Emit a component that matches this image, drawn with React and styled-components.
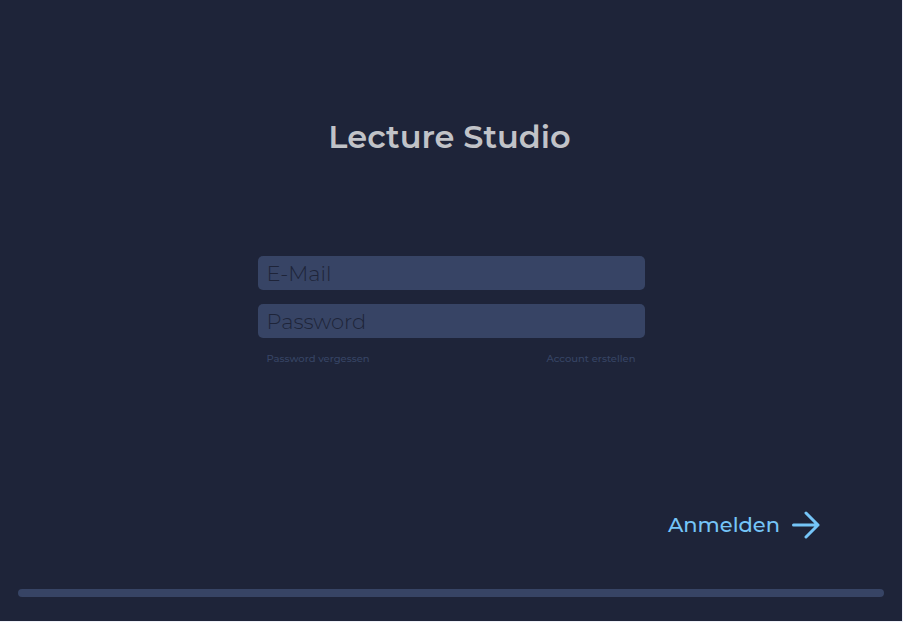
import React from "react";
import styled, { createGlobalStyle } from "styled-components";

const GlobalStyle = createGlobalStyle`
  * { box-sizing: border-box; }
  html { background: #f0f2fa; }
  body { margin: 0; padding: 0 1px 1px 0; }
`;

const Page = styled.div`
  display: flex;
  flex-direction: column;
  align-items: center;
  min-height: calc(100vh - 1px);
  padding: 117px 18px 24px;
  background: #1e2439;
  font-family: Montserrat, Inter, sans-serif;
`;

const Title = styled.h1`
  margin: 0;
  padding-right: 3px;
  color: #c1c3c8;
  font-size: 32px;
  font-weight: 600;
  line-height: 40px;
`;

const LoginForm = styled.form`
  display: flex;
  flex-direction: column;
  flex: 1;
  align-self: stretch;
  align-items: center;
  padding-top: 99px;
`;

const Fields = styled.div`
  display: flex;
  flex-direction: column;
  gap: 14px;
  width: 43%;
  min-width: 387px;
`;

const Field = styled.input`
  width: 100%;
  height: 34px;
  padding: 1px 9px 0;
  border: 0;
  border-radius: 5px;
  outline: none;
  background: #374465;
  color: #1e2439;
  font: 300 21px/32px Montserrat, Inter, sans-serif;

  &::placeholder { color: #1e2439; opacity: 1; }
`;

const Links = styled.nav`
  display: flex;
  justify-content: space-between;
  padding: 0 9px;
`;

const TextLink = styled.a`
  color: #374465;
  font-size: 10px;
  font-weight: 500;
  line-height: 14px;
  text-decoration: none;
`;

const SubmitButton = styled.button`
  display: flex;
  align-items: center;
  align-self: flex-end;
  gap: 12px;
  margin: auto 64px 50px 0;
  padding: 0;
  border: 0;
  background: none;
  color: #75c5f8;
  font: 500 21px/28px Montserrat, Inter, sans-serif;
  cursor: pointer;
`;

const Arrow = styled.svg`
  width: 28px;
  height: 28px;
  fill: none;
  stroke: currentColor;
  stroke-width: 3;
  stroke-linecap: round;
  stroke-linejoin: round;
`;

const BottomBar = styled.footer`
  align-self: stretch;
  height: 8px;
  border-radius: 4px;
  background: #374465;
`;

export default function App() {
  return (
    <>
      <GlobalStyle />
      <Page>
        <Title>Lecture Studio</Title>
        <LoginForm onSubmit={(event) => event.preventDefault()}>
          <Fields>
            <Field type="email" placeholder="E-Mail" aria-label="E-Mail" />
            <Field type="password" placeholder="Password" aria-label="Password" />
            <Links>
              <TextLink href="#reset">Password vergessen</TextLink>
              <TextLink href="#register">Account erstellen</TextLink>
            </Links>
          </Fields>
          <SubmitButton type="submit">
            Anmelden
            <Arrow viewBox="0 0 28 28" aria-hidden="true">
              <path d="M1.5 14H26M14 2L26 14L14 26" />
            </Arrow>
          </SubmitButton>
        </LoginForm>
        <BottomBar />
      </Page>
    </>
  );
}
